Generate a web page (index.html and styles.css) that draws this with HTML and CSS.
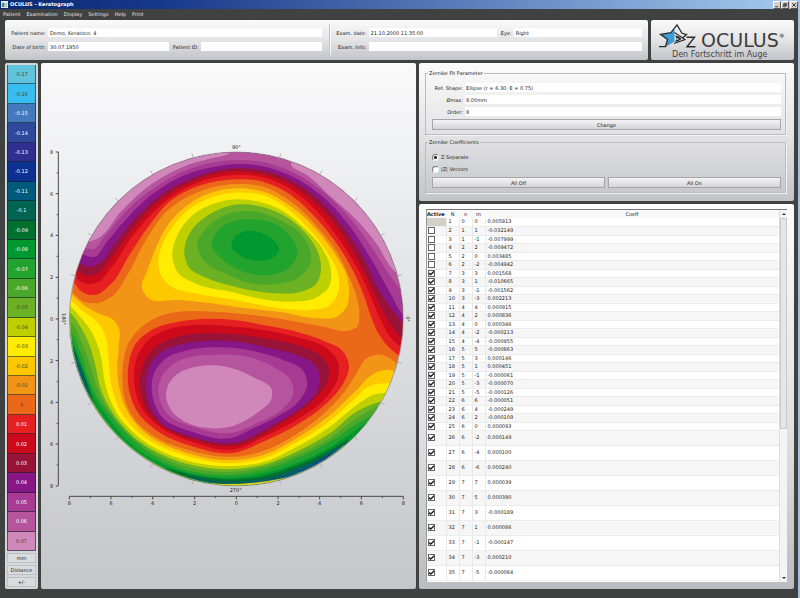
FILE: index.html
```html
<!DOCTYPE html>
<html lang="en">
<head>
<meta charset="utf-8">
<title>OCULUS - Keratograph</title>
<link rel="stylesheet" href="styles.css">
</head>
<body>
<header class="titlebar">
  <svg class="app-icon" viewBox="0 0 8 8" aria-hidden="true"><rect width="8" height="8" fill="#e9f0ee"/><rect x="1" y="2" width="3" height="5" fill="#3f8f80"/><rect x="5" y="2" width="2" height="5" fill="#a9bfc5"/></svg>
  <h1>OCULUS - Keratograph</h1>
  <div class="window-buttons">
    <button aria-label="Minimize"><svg viewBox="0 0 7 7"><path d="M1.5 5.5h3" stroke="#222"/></svg></button>
    <button aria-label="Restore"><svg viewBox="0 0 7 7"><path d="M2.5 1.5h3v2.500h-3zM1.500 3h3v2.500h-3z" fill="#d4d0c8" stroke="#222" stroke-width=".8"/></svg></button>
    <button class="close" aria-label="Close"><svg viewBox="0 0 7 7"><path d="M1.500 1.500l4 4M5.500 1.500l-4 4" stroke="#222"/></svg></button>
  </div>
</header>
<nav class="menu">
  <a href="#">Patient</a><a href="#">Examination</a><a href="#">Display</a><a href="#">Settings</a><a href="#">Help</a><a href="#">Print</a>
</nav>
<main class="workspace">
  <div class="top-row">
    <section class="panel patient">
      <div class="info">
        <div class="line"><label for="pname">Patient name:</label><input id="pname" value="Demo, Keratoco. 4"></div>
        <div class="line"><label for="dob">Date of birth:</label><input id="dob" value="30.07.1950"><label class="second" for="pid">Patient ID:</label><input id="pid"></div>
      </div>
      <div class="info exam">
        <div class="line"><label for="edate">Exam. date:</label><input id="edate" value="21.10.2000 11:35:00"><label class="eye" for="eye">Eye:</label><input id="eye" value="Right"></div>
        <div class="line"><label for="einfo">Exam. Info:</label><input id="einfo"></div>
      </div>
    </section>
    <section class="panel brand">
      <div class="brand-line">
        <svg class="star" viewBox="0 0 38 26" aria-hidden="true">
          <path d="M2.500 11.300L13 9.800L16.500 6V18.500L7.500 24L9.500 16.500Z" fill="#3c9bd8"/>
          <path d="M1 23.700H7.500L9.500 16.500L2.500 11.300L13 9.700L19 1.800L24 10.300L28.500 11.500L24.500 15" fill="none" stroke="#2b2b2b" stroke-width="1.300"/>
          <path d="M16.500 9.500L27 16.500L16 20.500" fill="none" stroke="#2b2b2b" stroke-width="1.200"/>
          <path d="M17 12.500Q21 12.500 23.500 16Q21 18.500 17 19Q19.500 15.500 17 12.500Z" fill="#2b2b2b"/>
          <path d="M18.500 15l3 1-3 1z" fill="#e8e8e8"/>
          <path d="M28.500 14.300h8L29 23.700h8.500" fill="none" stroke="#2b2b2b" stroke-width="1.400"/>
        </svg>
        <span class="brand-name">OCULUS</span><sup>®</sup>
      </div>
      <p class="tagline">Den Fortschritt im Auge</p>
    </section>
  </div>
  <div class="main-row">
    <aside class="panel scale">
      <ol class="steps" id="steps"></ol>
      <button>mm</button><button>Distance</button><button>+/-</button>
    </aside>
    <section class="panel map">
      <svg id="map" viewBox="-12 -231 1125 1578" preserveAspectRatio="xMidYMin meet" role="img" aria-label="Zernike surface map">
        <defs><clipPath id="disc"><circle cx="574" cy="537" r="500"/></clipPath></defs>
        <g id="contours" clip-path="url(#disc)"></g>
        <circle cx="574" cy="537" r="501" fill="none" stroke="#8d8d96" stroke-width="2"/>
        <g id="axes" class="axes"></g>
        <g class="degrees">
          <text x="574" y="27">90°</text><text x="572" y="1055">270°</text>
          <text transform="translate(52 537) rotate(90)">180°</text><text transform="translate(1083 537) rotate(90)">0°</text>
        </g>
      </svg>
    </section>
    <div class="side">
      <section class="panel settings">
        <fieldset class="fit">
          <legend>Zernike Fit Parameter</legend>
          <label for="shape">Ref. Shape:</label><input id="shape" value="Ellipse (r = 6.30, E = 0.75)">
          <label for="dmax">Ømax:</label><input id="dmax" value="8.00mm">
          <label for="order">Order:</label><input id="order" value="8">
          <button>Change</button>
        </fieldset>
        <fieldset class="coeffs">
          <legend>Zernike Coefficients</legend>
          <label><input type="radio" name="mode" checked>Z Separate</label>
          <label><input type="radio" name="mode">|Z| Vectors</label>
          <div class="pair"><button>All Off</button><button>All On</button></div>
        </fieldset>
      </section>
      <section class="panel list">
        <div class="frame">
          <div class="table-area">
            <table>
              <thead><tr><th class="active">Active</th><th class="num">N</th><th class="num">n</th><th class="num">m</th><th>Coeff</th></tr></thead>
              <tbody id="rows"></tbody>
            </table>
          </div>
          <div class="scrollbar" aria-hidden="true"><span class="arrow up"></span><span class="thumb"></span><span class="arrow down"></span></div>
        </div>
      </section>
    </div>
  </div>
</main>
<script src="app.js"></script>
</body>
</html>
```
FILE: styles.css
```css
* { box-sizing: border-box; }
html, body { height: 100%; margin: 0; }
body {
  display: flex; flex-direction: column;
  background: #404241; border-right: 2px solid #a9bfe0;
  font: 5px/6px "DejaVu Sans", sans-serif; color: #222;
  overflow: hidden;
}
button, input { font: inherit; color: inherit; margin: 0; padding: 0; min-width: 0; }
button {
  border: 1px solid #a6a6a8;
  background: linear-gradient(#f3f3f4, #d5d5d8);
}
input { border: 0; background: #fff; }
h1, p, ol { margin: 0; padding: 0; }

.titlebar {
  display: flex; align-items: center; gap: 2px; flex: none;
  height: 9px; padding: 0 0 0 1px;
  background: linear-gradient(90deg, #0b2a72, #16388a 20%, #a5cbf0);
}
.app-icon { width: 7px; height: 7px; }
.titlebar h1 { flex: 1; font-size: 5px; line-height: 7px; color: #fff; }
.window-buttons { display: flex; }
.window-buttons button {
  width: 8px; height: 8px; display: flex;
  border: 1px solid; border-color: #fff #555 #555 #fff; background: #d4d0c8;
}
.window-buttons .close { margin-left: 1px; }
.window-buttons svg { width: 100%; height: 100%; }

.menu { display: flex; gap: 6px; flex: none; height: 11px; padding: 2px 3px; }
.menu a { color: #e4e4e4; text-decoration: none; }

.workspace { flex: 1; min-height: 0; display: flex; flex-direction: column; gap: 3px; padding: 0 4px 9px 5px; }
.top-row { display: flex; gap: 3px; flex: none; }
.panel { border-radius: 2px; background: linear-gradient(#fbfbfb, #e4e4e6 50%, #c3c4c9); }

.patient { flex: 1; display: flex; padding: 8px 6px 9px 6px; }
.info { flex: 1; display: flex; flex-direction: column; gap: 5px; }
.patient .exam { border-left: 1px solid #f7f7f7; box-shadow: -1px 0 #c4c4c8; margin: -4px 0 -4px 8px; padding: 4px 0 4px 1px; }
.line { display: flex; align-items: center; }
.line label { width: 37px; padding-right: 2px; text-align: right; }
.line .second { width: 32px; }
.line .eye { width: 17px; }
.line input { flex: 1; height: 9px; padding: 0 2px; }
.line input:focus { outline: 1px solid #8fb5e0; }

.brand { width: 143px; padding: 2px 0 0 7px; }
.brand-line { display: flex; align-items: center; height: 28px; }
.star { width: 38px; height: 26px; flex: none; }
.brand-name { margin-left: 5px; padding-top: 8px; font-size: 19px; line-height: 18px; color: #3c3c3c; }
.brand sup { font-size: 6px; }
.tagline { padding-left: 14px; font-size: 8px; line-height: 10px; color: #444; white-space: nowrap; }

.main-row { flex: 1; min-height: 0; display: flex; gap: 3px; }
.scale { width: 33px; flex: none; display: flex; flex-direction: column; gap: 2px; padding: 2px; background: #d5d6da; }
.steps { flex: 1; display: flex; flex-direction: column; list-style: none; }
.steps li {
  flex: 1; display: flex; align-items: center; justify-content: center;
  background: var(--tone); color: #fff; border: solid rgba(20, 30, 40, .6); border-width: 0 1px 1px;
}
.steps .dark { color: #4a3c30; }
.scale button { height: 10px; border-color: #bfc0c4; background: #dadbdf; }
.map { flex: 1; min-width: 0; overflow: hidden; background: linear-gradient(#fafafb, #e6e7e9 35%, #c5c6ca); }
.map svg { display: block; width: 100%; height: 100%; }
.axes path { fill: none; stroke: #4a4a4a; stroke-width: 3; }
.axes .rim { stroke: #999; stroke-width: 2; }
.axes text, .degrees text { font-size: 15px; text-anchor: middle; fill: #222; }

.side { width: 375px; flex: none; display: flex; flex-direction: column; gap: 3px; }
.settings { padding: 7px 8px 8px 6px; }
fieldset { min-width: 0; margin: 0; border: 1px solid #bcbcc0; box-shadow: 1px 1px #f2f2f3; }
legend { margin-left: -4px; padding: 0 1px; line-height: 6px; }
.fit { display: grid; grid-template-columns: 31px 1fr; gap: 3px 2px; align-items: center; padding: 7px 4px 4px 6px; }
.fit label { text-align: right; }
.fit input { height: 9px; padding: 0 1px; }
.fit button { grid-column: 1 / 3; height: 11px; }
.coeffs { display: flex; flex-direction: column; gap: 4px; margin-top: 4px; padding: 8px 4px 4px 6px; }
.coeffs label { display: flex; align-items: center; gap: 2px; height: 8px; }
.coeffs input {
  appearance: none; width: 7px; height: 7px; border-radius: 50%;
  border: 1px solid; border-color: #777 #eee #eee #777;
}
.coeffs input:checked { background: radial-gradient(circle, #222 1px, #fff 2px); }
.pair { display: flex; gap: 3px; }
.pair button { flex: 1; height: 11px; }

.list { flex: 1; min-height: 0; display: flex; padding: 5px 7px 7px; background: linear-gradient(#fcfcfc, #e0e0e3 60%, #bbbcc1); }
.frame { flex: 1; display: flex; border-top: 1px solid #777; border-left: 1px solid #999; background: #fff; overflow: hidden; }
.table-area { flex: 1; min-height: 0; overflow: hidden; }
table { width: 100%; border-collapse: collapse; table-layout: fixed; }
th { height: 8px; padding: 0; font-weight: normal; line-height: 7px; background: #f9f9f9; }
.active { width: 19px; font-weight: bold; text-align: left; white-space: nowrap; }
.num { width: 13px; }
td { padding: 0 0 0 2px; height: 8px; line-height: 7px; border-right: 1px solid #e8e8e8; border-bottom: 1px solid #ececec; }
td:first-child { padding-left: 1px; }
td:last-child { border-right: 0; }
tbody tr:nth-child(even) { background: #f6f6f6; }
tbody tr:nth-child(even) td { height: 9px; }
tbody tr.tall td { height: 15px; }
.off { background: #d4d0c8; }
td input {
  appearance: none; display: block; width: 7px; height: 7px;
  border: 1px solid #666;
}
td input:checked::before {
  content: ""; display: block; width: 5px; height: 5px; background: #222;
  clip-path: polygon(0 40%, 35% 60%, 100% 0, 100% 40%, 35% 100%, 0 75%);
}
.scrollbar { width: 8px; display: flex; flex-direction: column; align-items: center; background: #f4f4f4; border-left: 1px solid #ddd; }
.thumb { width: 7px; height: 211px; border: 1px solid #c9c9cc; background: #e6e6e8; }
.arrow { height: 8px; display: flex; align-items: center; }
.arrow::before { content: ""; border: 2px solid transparent; }
.up::before { border-top: 0; border-bottom-color: #333; }
.down { margin-top: auto; }
.down::before { border-bottom: 0; border-top-color: #333; }
```
FILE: app.js
```js
const steps = [
  ["-0.17", "#5fc4dc"], ["-0.16", "#38bdf0"], ["-0.15", "#4479be"], ["-0.14", "#30489b"], ["-0.13", "#2f2f8f"],
  ["-0.12", "#0c3190"], ["-0.11", "#005a7c"], ["-0.1", "#006450"], ["-0.09", "#00712d"], ["-0.08", "#00982f"],
  ["-0.07", "#22a32d"], ["-0.06", "#49a829"], ["-0.05", "#6cb023"], ["-0.04", "#bfd000"], ["-0.03", "#ffec00"],
  ["-0.02", "#fdc800"], ["-0.01", "#f29517"], ["0", "#ec6819"], ["0.01", "#e62020"], ["0.02", "#cc0a1c"],
  ["0.03", "#991338"], ["0.04", "#871687"], ["0.05", "#a73a92"], ["0.06", "#b6549e"], ["0.07", "#d088bb"]
];
const tones = Object.fromEntries(steps);
const darkText = ["-0.17", "-0.16", "-0.05", "-0.04", "-0.03", "-0.02", "-0.01", "0", "0.07"];
document.getElementById("steps").innerHTML = steps.map(([v, tone]) =>
  `<li${darkText.includes(v) ? ' class="dark"' : ""} style="--tone:${tone}">${v}</li>`).join("");

/* Smooth closed curve through a flat list of x,y pairs; tangents scale with segment length. */
function curve(text) {
  const n = text.trim().split(/[\s,]+/).map(Number), p = [];
  for (let i = 0; i < n.length; i += 2) p.push([n[i], n[i + 1]]);
  const at = i => p[(i + p.length) % p.length];
  const dist = (a, b) => Math.hypot(a[0] - b[0], a[1] - b[1]);
  const tangent = i => {
    const a = at(i - 1), b = at(i), c = at(i + 1), d1 = dist(a, b), d2 = dist(b, c);
    const mix = k => ((b[k] - a[k]) / d1 * d2 + (c[k] - b[k]) / d2 * d1) / (d1 + d2);
    return [mix(0), mix(1)];
  };
  let d = "M" + p[0];
  for (let i = 0; i < p.length; i++) {
    const b = at(i), c = at(i + 1), t = tangent(i), u = tangent(i + 1), s = dist(b, c) / 3;
    d += `C${b[0] + t[0] * s},${b[1] + t[1] * s} ${c[0] - u[0] * s},${c[1] - u[1] * s} ${c}`;
  }
  return d + "Z";
}
const above = " 1180,300 1100,-100 574,-200 0,-100 -60,300";
const below = " 1250,900 1100,1200 574,1300 0,1200 -60,800";
const contours = [
  ["-0.01", "60,430 85,460 110,482 150,490 200,470 250,400 300,305 370,210 450,160 570,132 655,140 755,198 825,270 878,340 912,410 935,470 943,530 935,562 915,571 835,560 755,545 655,529 570,520 470,514 400,515 340,530 280,570 250,610 236,660 232,720 240,780 270,840 330,890 430,930 570,950 655,933 755,882 835,822 895,760 935,700 965,655 995,644 1035,655 1062,680" + below],
  ["-0.02", "290,440 306,395 330,330 380,240 450,180 570,145 655,155 755,212 825,282 875,350 905,405 912,450 905,500 875,530 825,535 705,516 570,500 500,490 400,480 310,474"],
  ["-0.03", "340,370 370,280 430,210 500,172 570,158 655,166 735,212 795,270 845,335 879,400 880,455 855,495 795,510 705,505 570,480 450,460 380,440 350,410"],
  ["-0.04", "382,350 400,280 450,220 510,190 570,178 635,184 705,208 775,262 835,330 857,385 852,440 815,472 735,485 655,478 570,458 450,430 400,400"],
  ["-0.05", "418,335 440,270 490,225 570,194 635,197 705,220 775,272 820,340 828,390 815,430 765,456 695,460 570,440 480,412 430,380"],
  ["-0.06", "456,315 480,270 520,235 570,216 635,215 705,240 765,280 795,330 796,370 765,410 695,432 605,427 550,405 480,365"],
  ["-0.07", "500,315 520,270 560,245 625,238 705,260 745,300 758,335 735,380 675,405 595,395 540,365"],
  ["-0.08", "560,318 572,288 600,274 631,274 670,288 695,310 702,330 685,352 640,362 592,350"],
  ["-0.02", "60,440 80,462 120,498 160,520 205,540 222,565 221,620 217,680 222,740 245,810 300,878 400,930 570,960 655,945 755,895 855,825 935,750 985,702 1035,690 1062,700" + below],
  ["-0.03", "55,455 78,480 110,510 160,550 182,590 190,650 200,740 230,820 290,885 400,940 570,969 655,955 755,907 855,842 925,780 975,738 1030,730" + below],
  ["-0.04", "55,475 76,498 110,535 145,585 168,650 180,730 210,810 280,890 400,954 570,978 655,966 755,920 855,860 935,795 985,764 1025,758" + below],
  ["-0.05", "50,500 76,518 105,558 135,620 152,680 165,740 195,805 262,887 380,956 570,987 655,974 755,935 855,880 935,815 1000,787" + below],
  ["-0.06", "50,515 78,545 115,620 140,690 157,745 190,810 262,892 380,965 570,995 655,981 755,945 855,895 935,835 1010,795" + below],
  ["-0.07", "50,530 80,575 108,640 130,710 152,762 200,830 270,905 380,975 570,1004 655,990 755,955 855,905 955,840 1030,800" + below],
  ["-0.08", "50,560 80,600 105,660 125,715 145,765 180,820 280,930 390,986 570,1012 655,1000 755,969 855,922 955,855 1040,800" + below],
  ["-0.1", "60,560 82,610 100,660 120,710 138,765 146,800 100,780 50,680"],
  ["-0.11", "84,640 102,685 122,745 132,780 90,740"],
  ["-0.09", "350,985 470,1010 570,1018 655,1008 755,976 855,930 910,898 850,960 700,1060 500,1080"],
  ["-0.1", "430,1010 500,1020 570,1023 655,1015 755,984 855,938 905,905 850,970 700,1060 500,1080"],
  ["-0.11", "600,1030 680,1018 755,992 830,954 880,922 850,990 700,1060"],
  ["-0.12", "640,1030 700,1017 755,1000 810,973 860,942 830,1000 700,1055"],
  ["0.01", "50,390 85,425 110,455 150,465 200,430 250,350 310,260 380,180 460,138 570,118 635,121 725,157 805,226 865,297 915,375 955,462 980,535 1000,580 1035,625 1075,655" + above],
  ["0.02", "50,370 88,405 110,427 150,430 200,382 260,292 330,212 400,157 480,120 570,105 635,108 735,146 815,212 885,302 935,382 975,465 1010,545 1035,590 1075,625" + above],
  ["0.03", "60,350 95,388 120,407 155,402 200,350 270,257 350,177 430,130 500,104 570,94 635,98 735,132 815,192 885,272 945,372 995,475 1035,550 1075,600" + above],
  ["0.04", "60,340 100,369 130,380 165,368 210,310 290,215 370,150 450,112 570,85 635,88 735,120 825,182 895,262 955,354 1005,455 1050,520 1085,560" + above],
  ["0.05", "60,310 110,342 150,350 185,307 250,230 330,157 420,105 500,82 570,72 635,75 735,106 835,172 905,247 975,352 1025,440 1080,530" + above],
  ["0.06", "60,290 115,322 145,327 180,288 250,206 340,136 430,88 500,68 570,60 635,63 735,92 835,156 915,235 985,330 1045,420 1090,475" + above],
  ["0.07", "90,300 130,305 155,297 230,212 320,132 430,74 500,55 550,43 430,0 200,50 80,200"],
  ["0.07", "740,78 790,108 855,168 935,240 995,312 1045,390 1100,430 1100,200 850,0"],
  ["0.01", "250,680 270,615 330,565 400,545 470,537 570,540 655,555 755,575 835,602 895,635 912,680 895,730 845,790 755,855 655,905 570,938 430,915 340,875 280,820 252,750"],
  ["0.02", "268,730 275,655 310,600 370,568 450,555 570,560 655,570 755,592 845,625 879,665 880,710 845,770 755,840 655,891 570,928 440,905 350,865 290,805"],
  ["0.03", "284,730 300,660 340,615 400,590 480,580 570,583 655,594 755,615 825,645 853,685 845,730 805,780 715,845 570,917 440,898 350,857 300,800"],
  ["0.04", "302,720 315,675 350,635 400,615 480,603 570,604 655,620 755,645 805,670 825,710 815,755 765,805 675,860 570,908 440,890 350,850 310,785"],
  ["0.05", "320,735 327,700 370,650 420,632 500,622 570,624 635,635 715,660 775,692 787,730 765,780 705,825 625,865 560,894 440,875 350,830"],
  ["0.06", "340,750 348,715 390,668 440,650 510,644 570,645 615,652 685,680 738,722 745,760 715,805 635,850 555,879 450,862 370,825"],
  ["0.07", "363,765 372,730 400,700 450,681 510,676 560,684 625,712 680,748 680,775 635,820 555,860 500,865 430,850 380,812"]
];
document.getElementById("contours").innerHTML =
  `<rect x="60" y="20" width="1030" height="1030" fill="${tones["0"]}"/>` +
  contours.map(([v, p]) => `<path fill="${tones[v]}" d="${curve(p)}"/>`).join("") +
  `<path d="M74 537A500 500 0 0 0 900 916" fill="none" stroke="#9ac93a" stroke-width="5"/>` +
  `<path d="M490 1034Q600 1042 720 1018" fill="none" stroke="#dbd315" stroke-width="8"/>`;

let axes = '<path d="M40 36V1037M73 1069H1075"/>';
for (let i = 0; i <= 16; i++) {
  const y = Math.round(36 + i * 62.6), x = Math.round(73 + i * 62.6), big = i % 2 === 0;
  axes += `<path d="M${big ? 32 : 35} ${y}H40M${x} 1069V${big ? 1078 : 1074}"/>`;
  if (big) axes += `<text x="20" y="${y + 6}">${Math.abs(8 - i)}</text><text x="${x}" y="1094">${Math.abs(8 - i)}</text>`;
}
for (let k = 0; k < 24; k++) {
  if (k % 6 === 0) continue;
  const a = k * Math.PI / 12, c = Math.cos(a), s = Math.sin(a);
  axes += `<path class="rim" d="M${574 + 496 * c} ${537 + 496 * s}L${574 + 514 * c} ${537 + 514 * s}"/>`;
}
document.getElementById("axes").innerHTML = axes;

const modes = `0 0 0.005913|1 1 -0.032149|1 -1 -0.007999|2 2 -0.009472|2 0 0.003485|2 -2 -0.004942|3 3 0.001568|3 1 -0.010665|3 -1 -0.001562|3 -3 0.002213|4 4 0.000915|4 2 0.000836|4 0 0.000346|4 -2 -0.000213|4 -4 -0.000955|5 5 -0.000863|5 3 0.000146|5 1 0.000451|5 -1 -0.000061|5 -3 -0.000070|5 -5 -0.000126|6 6 -0.000051|6 4 -0.000249|6 2 -0.000109|6 0 0.000093|6 -2 0.000149|6 -4 0.000100|6 -6 0.000240|7 7 0.000039|7 5 0.000390|7 3 -0.000189|7 1 0.000086|7 -1 -0.000147|7 -3 0.000210|7 -5 -0.000064`;
document.getElementById("rows").innerHTML = modes.split("|").map((row, i) => {
  const [n, m, c] = row.split(" "), id = i + 1;
  const box = id === 1 ? '<td class="off"></td>'
    : `<td><input type="checkbox" aria-label="Mode ${id} active"${id > 6 ? " checked" : ""}></td>`;
  return `<tr${id > 25 ? ' class="tall"' : ""}>${box}<td>${id}</td><td>${n}</td><td>${m}</td><td>${c}</td></tr>`;
}).join("");
```
